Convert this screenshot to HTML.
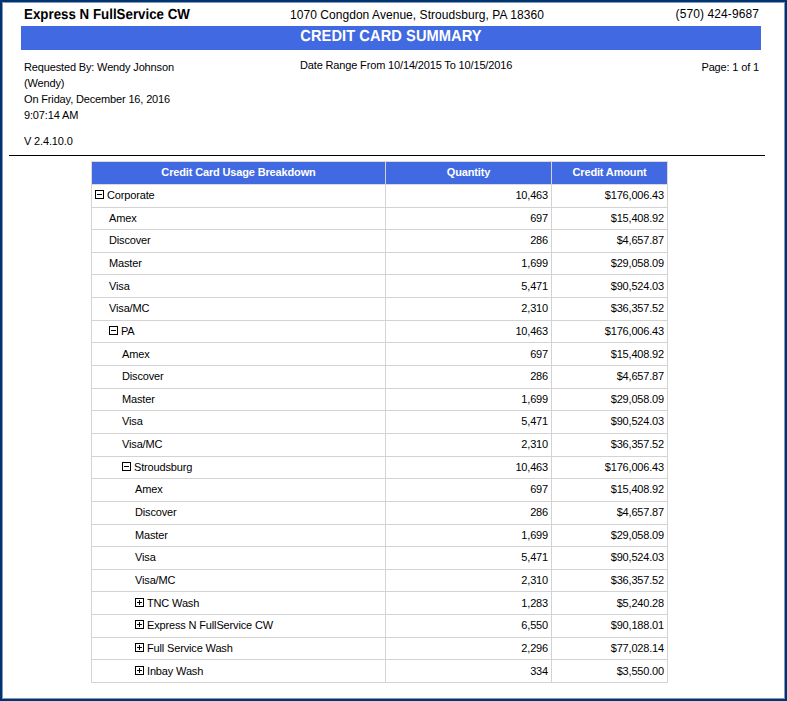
<!DOCTYPE html>
<html><head><meta charset="utf-8"><title>Credit Card Summary</title>
<style>
html,body{margin:0;padding:0;background:#fff;}
body{width:787px;height:701px;position:relative;overflow:hidden;font-family:"Liberation Sans",sans-serif;color:#000;font-size:11px;letter-spacing:-0.15px;}
.abs{position:absolute;white-space:nowrap;}
.frame{position:absolute;left:0;top:0;width:787px;height:701px;box-sizing:border-box;border-style:solid;border-color:#003371;border-width:2px 2px 2px 2px;}
.frame2{position:absolute;left:2px;top:2px;width:783px;height:697px;box-sizing:border-box;border:1px solid #8299b9;}
.bar{position:absolute;left:21px;top:26px;width:740px;height:24px;background:#4169e1;}
.hl{position:absolute;background:#d3d3d3;height:1px;}
.vl{position:absolute;background:#d3d3d3;width:1px;}
.hd{position:absolute;background:#4169e1;color:#fff;font-weight:bold;text-align:center;font-size:11px;}
.ic{position:absolute;width:9px;height:9px;box-sizing:border-box;border:1px solid #000;background:#fff;}
.ic i{position:absolute;left:1px;top:3px;width:5px;height:1px;background:#000;}
.ic b{position:absolute;left:3px;top:1px;width:1px;height:5px;background:#000;}
.t{position:absolute;white-space:nowrap;line-height:14px;height:14px;}
.r{text-align:right;letter-spacing:-0.18px;}
</style></head><body>
<div class="frame"></div><div class="frame2"></div>

<div class="abs" style="left:24px;top:7px;font-size:13.33px;font-weight:bold;line-height:16px;letter-spacing:0px;text-rendering:geometricPrecision;transform:scaleY(1.09);transform-origin:0 12px;">Express N FullService CW</div>
<div class="abs" style="left:290px;top:7px;font-size:12px;line-height:16px;letter-spacing:0.05px;">1070 Congdon Avenue, Stroudsburg, PA 18360</div>
<div class="abs" style="right:28px;top:6px;font-size:12px;line-height:16px;letter-spacing:0.1px;">(570) 424-9687</div>
<div class="bar"></div>
<div class="abs" style="left:21px;width:740px;top:28px;text-align:center;color:#fff;font-weight:bold;font-size:14.67px;line-height:18px;letter-spacing:0.06px;text-rendering:geometricPrecision;transform:scaleY(1.09);transform-origin:0 14px;">CREDIT CARD SUMMARY</div>
<div class="abs" style="left:24px;top:60px;line-height:14px;">Requested By: Wendy Johnson</div>
<div class="abs" style="left:24px;top:76px;line-height:14px;">(Wendy)</div>
<div class="abs" style="left:24px;top:92px;line-height:14px;">On Friday, December 16, 2016</div>
<div class="abs" style="left:24px;top:108px;line-height:14px;">9:07:14 AM</div>
<div class="abs" style="left:24px;top:134px;line-height:14px;">V 2.4.10.0</div>
<div class="abs" style="left:300px;top:58px;line-height:14px;">Date Range From 10/14/2015 To 10/15/2016</div>
<div class="abs" style="right:28px;top:60px;line-height:14px;">Page: 1 of 1</div>
<div style="position:absolute;left:9px;top:155px;width:756px;height:1px;background:#000;"></div>
<div class="hd" style="left:92px;top:162px;width:293px;height:22px;line-height:20px;">Credit Card Usage Breakdown</div>
<div class="hd" style="left:386px;top:162px;width:165px;height:22px;line-height:20px;">Quantity</div>
<div class="hd" style="left:552px;top:162px;width:115px;height:22px;line-height:20px;">Credit Amount</div>
<div class="hl" style="left:91px;top:161px;width:577px;background:#dcdad2;"></div>
<div class="hl" style="left:91px;top:184px;width:577px;background:#dcdad2;"></div>
<div class="hl" style="left:91px;top:207px;width:577px;"></div>
<div class="hl" style="left:91px;top:229px;width:577px;"></div>
<div class="hl" style="left:91px;top:252px;width:577px;"></div>
<div class="hl" style="left:91px;top:274px;width:577px;"></div>
<div class="hl" style="left:91px;top:297px;width:577px;"></div>
<div class="hl" style="left:91px;top:320px;width:577px;"></div>
<div class="hl" style="left:91px;top:342px;width:577px;"></div>
<div class="hl" style="left:91px;top:365px;width:577px;"></div>
<div class="hl" style="left:91px;top:388px;width:577px;"></div>
<div class="hl" style="left:91px;top:410px;width:577px;"></div>
<div class="hl" style="left:91px;top:433px;width:577px;"></div>
<div class="hl" style="left:91px;top:456px;width:577px;"></div>
<div class="hl" style="left:91px;top:478px;width:577px;"></div>
<div class="hl" style="left:91px;top:501px;width:577px;"></div>
<div class="hl" style="left:91px;top:524px;width:577px;"></div>
<div class="hl" style="left:91px;top:546px;width:577px;"></div>
<div class="hl" style="left:91px;top:569px;width:577px;"></div>
<div class="hl" style="left:91px;top:591px;width:577px;"></div>
<div class="hl" style="left:91px;top:614px;width:577px;"></div>
<div class="hl" style="left:91px;top:637px;width:577px;"></div>
<div class="hl" style="left:91px;top:659px;width:577px;"></div>
<div class="hl" style="left:91px;top:682px;width:577px;"></div>
<div class="vl" style="left:91px;top:161px;height:522px;"></div>
<div class="vl" style="left:385px;top:161px;height:522px;"></div>
<div class="vl" style="left:551px;top:161px;height:522px;"></div>
<div class="vl" style="left:667px;top:161px;height:522px;"></div>
<div class="vl" style="left:91px;top:161px;height:24px;background:#dcdad2;"></div>
<div class="vl" style="left:667px;top:161px;height:24px;background:#dcdad2;"></div>
<div class="ic" style="left:95px;top:190px;"><i></i></div>
<div class="t" style="left:107px;top:188px;">Corporate</div>
<div class="t r" style="right:239px;top:188px;">10,463</div>
<div class="t r" style="right:123px;top:188px;">$176,006.43</div>
<div class="t" style="left:109px;top:211px;">Amex</div>
<div class="t r" style="right:239px;top:211px;">697</div>
<div class="t r" style="right:123px;top:211px;">$15,408.92</div>
<div class="t" style="left:109px;top:233px;">Discover</div>
<div class="t r" style="right:239px;top:233px;">286</div>
<div class="t r" style="right:123px;top:233px;">$4,657.87</div>
<div class="t" style="left:109px;top:256px;">Master</div>
<div class="t r" style="right:239px;top:256px;">1,699</div>
<div class="t r" style="right:123px;top:256px;">$29,058.09</div>
<div class="t" style="left:109px;top:279px;">Visa</div>
<div class="t r" style="right:239px;top:279px;">5,471</div>
<div class="t r" style="right:123px;top:279px;">$90,524.03</div>
<div class="t" style="left:109px;top:301px;">Visa/MC</div>
<div class="t r" style="right:239px;top:301px;">2,310</div>
<div class="t r" style="right:123px;top:301px;">$36,357.52</div>
<div class="ic" style="left:109px;top:326px;"><i></i></div>
<div class="t" style="left:121px;top:324px;">PA</div>
<div class="t r" style="right:239px;top:324px;">10,463</div>
<div class="t r" style="right:123px;top:324px;">$176,006.43</div>
<div class="t" style="left:122px;top:347px;">Amex</div>
<div class="t r" style="right:239px;top:347px;">697</div>
<div class="t r" style="right:123px;top:347px;">$15,408.92</div>
<div class="t" style="left:122px;top:369px;">Discover</div>
<div class="t r" style="right:239px;top:369px;">286</div>
<div class="t r" style="right:123px;top:369px;">$4,657.87</div>
<div class="t" style="left:122px;top:392px;">Master</div>
<div class="t r" style="right:239px;top:392px;">1,699</div>
<div class="t r" style="right:123px;top:392px;">$29,058.09</div>
<div class="t" style="left:122px;top:414px;">Visa</div>
<div class="t r" style="right:239px;top:414px;">5,471</div>
<div class="t r" style="right:123px;top:414px;">$90,524.03</div>
<div class="t" style="left:122px;top:437px;">Visa/MC</div>
<div class="t r" style="right:239px;top:437px;">2,310</div>
<div class="t r" style="right:123px;top:437px;">$36,357.52</div>
<div class="ic" style="left:122px;top:462px;"><i></i></div>
<div class="t" style="left:134px;top:460px;">Stroudsburg</div>
<div class="t r" style="right:239px;top:460px;">10,463</div>
<div class="t r" style="right:123px;top:460px;">$176,006.43</div>
<div class="t" style="left:135px;top:482px;">Amex</div>
<div class="t r" style="right:239px;top:482px;">697</div>
<div class="t r" style="right:123px;top:482px;">$15,408.92</div>
<div class="t" style="left:135px;top:505px;">Discover</div>
<div class="t r" style="right:239px;top:505px;">286</div>
<div class="t r" style="right:123px;top:505px;">$4,657.87</div>
<div class="t" style="left:135px;top:528px;">Master</div>
<div class="t r" style="right:239px;top:528px;">1,699</div>
<div class="t r" style="right:123px;top:528px;">$29,058.09</div>
<div class="t" style="left:135px;top:550px;">Visa</div>
<div class="t r" style="right:239px;top:550px;">5,471</div>
<div class="t r" style="right:123px;top:550px;">$90,524.03</div>
<div class="t" style="left:135px;top:573px;">Visa/MC</div>
<div class="t r" style="right:239px;top:573px;">2,310</div>
<div class="t r" style="right:123px;top:573px;">$36,357.52</div>
<div class="ic" style="left:135px;top:598px;"><i></i><b></b></div>
<div class="t" style="left:147px;top:596px;">TNC Wash</div>
<div class="t r" style="right:239px;top:596px;">1,283</div>
<div class="t r" style="right:123px;top:596px;">$5,240.28</div>
<div class="ic" style="left:135px;top:620px;"><i></i><b></b></div>
<div class="t" style="left:147px;top:618px;">Express N FullService CW</div>
<div class="t r" style="right:239px;top:618px;">6,550</div>
<div class="t r" style="right:123px;top:618px;">$90,188.01</div>
<div class="ic" style="left:135px;top:643px;"><i></i><b></b></div>
<div class="t" style="left:147px;top:641px;">Full Service Wash</div>
<div class="t r" style="right:239px;top:641px;">2,296</div>
<div class="t r" style="right:123px;top:641px;">$77,028.14</div>
<div class="ic" style="left:135px;top:666px;"><i></i><b></b></div>
<div class="t" style="left:147px;top:664px;">Inbay Wash</div>
<div class="t r" style="right:239px;top:664px;">334</div>
<div class="t r" style="right:123px;top:664px;">$3,550.00</div>
</body></html>
